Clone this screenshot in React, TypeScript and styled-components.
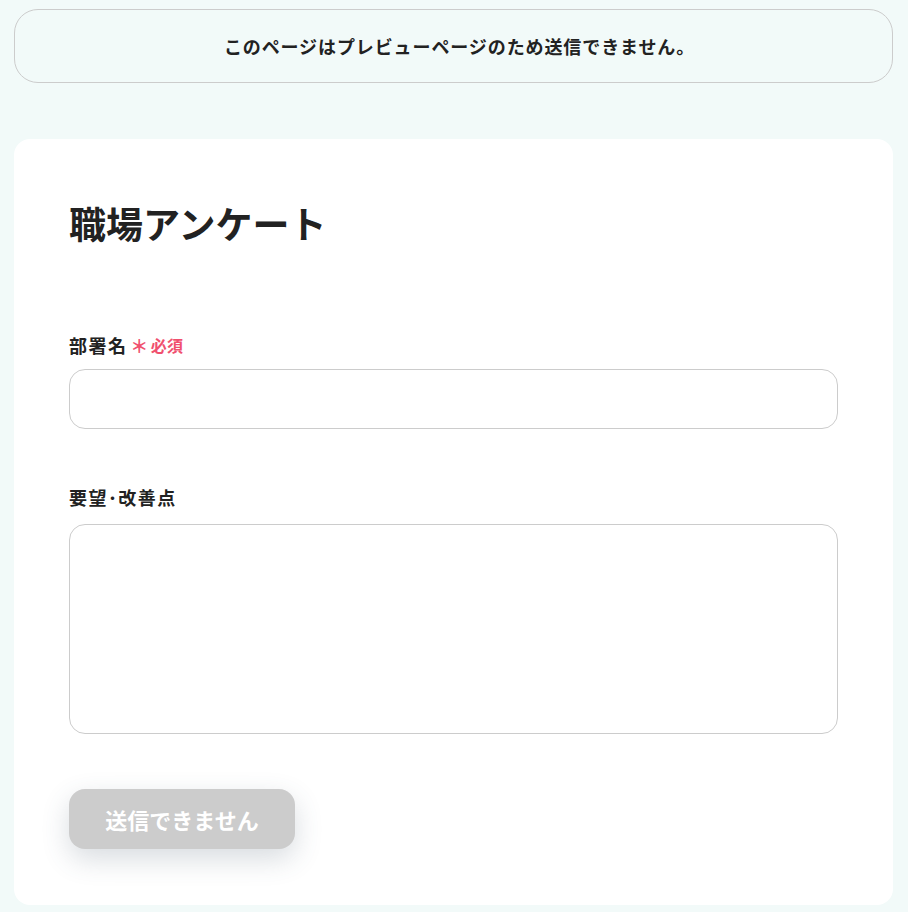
import styled, { createGlobalStyle } from 'styled-components';

const GlobalStyle = createGlobalStyle`
  body {
    margin: 0;
    background-color: #f2faf9;
    font-family: "Noto Sans CJK JP", "Noto Sans", sans-serif;
    color: #222222;
  }
`;

export default function App() {
  return (
    <>
      <GlobalStyle />
      <Style.Page>
        <Style.Notice>このページはプレビューページのため送信できません。</Style.Notice>
        <Style.Card>
          <Style.Title>職場アンケート</Style.Title>
          <Style.Field $gap={12}>
            <Style.Label>
              部署名
              <Style.Required>
                <Style.Asterisk>＊</Style.Asterisk>必須
              </Style.Required>
            </Style.Label>
            <Style.Input type="text" />
          </Style.Field>
          <Style.Field $gap={15}>
            <Style.Label>要望･改善点</Style.Label>
            <Style.TextArea />
          </Style.Field>
          <Style.SubmitButton disabled>送信できません</Style.SubmitButton>
        </Style.Card>
      </Style.Page>
    </>
  );
}

const Style = {
  Page: styled.div`
    display: flex;
    flex-direction: column;
    gap: 56px;

    padding: 9px 15px 7px 14px;
  `,
  Notice: styled.div`
    display: flex;
    justify-content: center;
    align-items: center;

    height: 72px;
    padding-left: 12px;

    border: 1px solid #cccccc;
    border-radius: 24px;

    font-size: 18px;
    font-weight: 700;
    letter-spacing: 0.05em;
  `,
  Card: styled.div`
    display: flex;
    flex-direction: column;
    align-items: flex-start;

    padding: 56px 55px 56px;

    background-color: #ffffff;
    border-radius: 16px;
  `,
  Title: styled.h1`
    margin: 0 0 82px;

    font-size: 37px;
    font-weight: 700;
    line-height: 56px;
  `,
  Field: styled.div<{ $gap: number }>`
    display: flex;
    flex-direction: column;
    gap: ${({ $gap }) => $gap}px;

    width: 100%;
    margin-bottom: 56px;

    &:last-of-type {
      margin-bottom: 55px;
    }
  `,
  Label: styled.label`
    display: flex;
    align-items: center;
    gap: 3px;

    font-size: 18px;
    font-weight: 700;
    line-height: 24px;
    letter-spacing: 0.08em;
  `,
  Required: styled.span`
    display: flex;
    align-items: center;

    font-size: 16px;
    letter-spacing: 0.02em;
    color: #f0506e;
  `,
  Asterisk: styled.span`
    font-size: 18px;
    margin-right: 2px;
  `,
  Input: styled.input`
    box-sizing: border-box;
    width: 100%;
    height: 60px;
    padding: 0 16px;

    border: 1px solid #cccccc;
    border-radius: 16px;
    outline: none;

    font-family: inherit;
    font-size: 16px;
  `,
  TextArea: styled.textarea`
    box-sizing: border-box;
    width: 100%;
    height: 210px;
    padding: 16px;

    border: 1px solid #cccccc;
    border-radius: 16px;
    outline: none;
    resize: none;

    font-family: inherit;
    font-size: 16px;
  `,
  SubmitButton: styled.button`
    width: 226px;
    height: 60px;

    border: none;
    border-radius: 16px;
    background-color: #cccccc;
    box-shadow: 0 10px 28px rgba(60, 80, 100, 0.2);

    font-family: inherit;
    font-size: 22px;
    font-weight: 700;
    color: #ffffff;
  `,
};
